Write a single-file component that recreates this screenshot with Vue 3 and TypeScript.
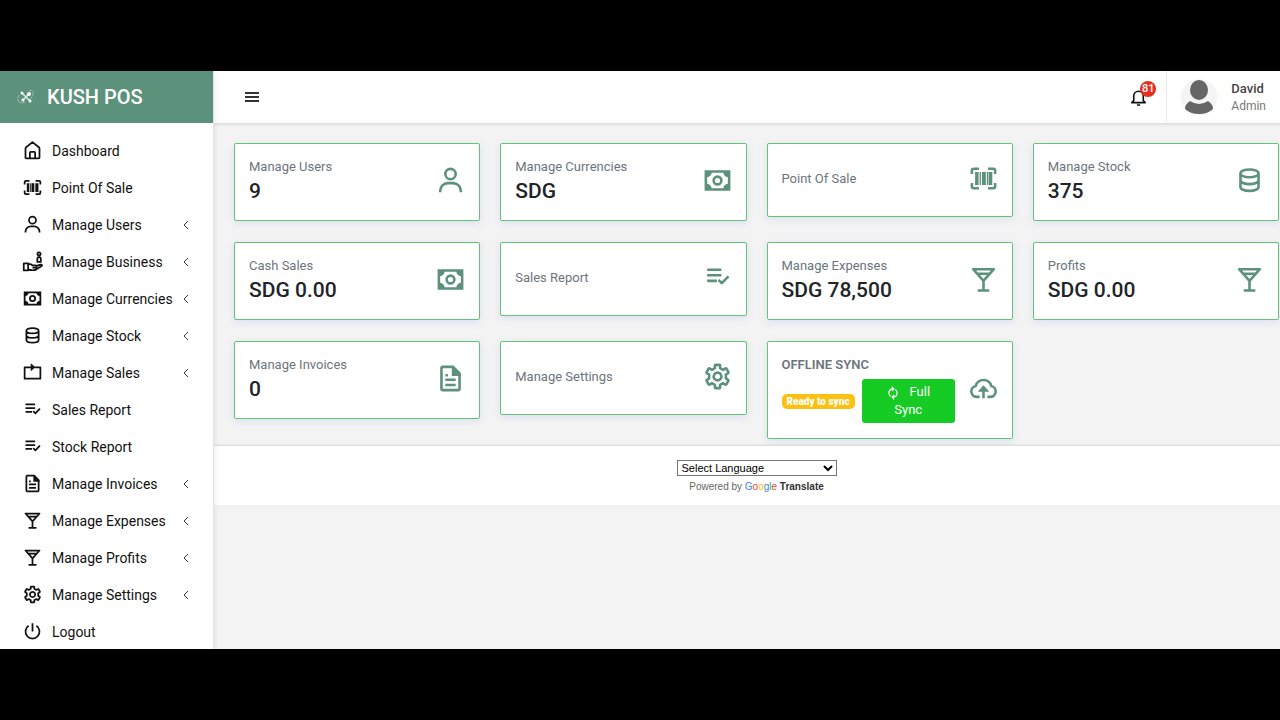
<script setup lang="ts">
import { ref } from 'vue'

interface Glyph {
  fill?: string
  stroke?: string
}

interface MenuItem {
  label: string
  icon: string
  sub?: boolean
}

interface StatCard {
  label: string
  icon: string
  value?: string
}

const glyphs: Record<string, Glyph> = {
  home: { stroke: 'M4 21V9.500Q4 9 4.400 8.600L12 2.500L19.600 8.600Q20 9 20 9.500V20Q20 21 19 21H5Q4 21 4 20M9 21V14.500Q9 13.500 10 13.500H14Q15 13.500 15 14.500V21' },
  barcode: {
    fill: 'M5.500 7H8.200v10H5.500zM9 7h1v10H9zM10.800 7h3v10h-3zM14.600 7h1v10h-1zM16 7h2.800v10H16z',
    stroke: 'M8.500 4.500H4.500Q3 4.500 3 6V8.500M15.500 4.500h4Q21 4.500 21 6V8.500M8.500 19.500H4.500Q3 19.500 3 18V15.500M15.500 19.500h4Q21 19.500 21 18V15.500',
  },
  user: { fill: 'M12 2a5 5 0 1 0 5 5 5 5 0 0 0-5-5zm0 8a3 3 0 1 1 3-3 3 3 0 0 1-3 3zm9 11v-1a7 7 0 0 0-7-7h-4a7 7 0 0 0-7 7v1h2v-1a5 5 0 0 1 5-5h4a5 5 0 0 1 5 5v1z' },
  business: { stroke: 'M2 14h5v8H2zM7 15h3l2 1.500h3.500q1.500 0 1.500 1.200t-1.500 1.300H12M17 17l4-1.500q2-.3 1.800 1.300l-6.300 4.200Q13 23 7 21M17.500 12.500V9q0-2 2-2t2 2v3.500zM19.500 1.500a1.800 1.800 0 1 1-.1 0z' },
  money: { fill: 'M2 4v16h20V4zm18 10.500q-3 .5-3.500 3.500h-9Q7 15 4 14.500v-5Q7 9 7.500 6h9q.5 3 3.500 3.500zM12 8a4 4 0 1 0 0 8 4 4 0 0 0 0-8zm0 6a2 2 0 1 1 0-4 2 2 0 0 1 0 4z' },
  stock: { stroke: 'M5 6.500c0-1.700 3-3 7-3s7 1.300 7 3-3 3-7 3-7-1.300-7-3zM5 6.500v10.500c0 1.700 3 3 7 3s7-1.300 7-3v-10.500M5 11.800c0 1.700 3 3 7 3s7-1.300 7-3' },
  sales: { stroke: 'M15 6h6v13H3V6h8', fill: 'M10 1.500 15.500 6 10 10.500z' },
  report: { fill: 'M4 5h11v2H4zM4 9.300h11v2H4zM4 13.600h7.500v2H4z', stroke: 'M12.800 13.800 15.300 16.300l5.200-5.200' },
  file: { stroke: 'M5 3h9l5 5v12q0 1-1 1H6q-1 0-1-1V4q0-1 1-1M8 13h8M8 17h8M8 9.500h2', fill: 'M13 3h1.500L20 8.500V10h-7z' },
  drink: { stroke: 'M4 4h16L12 13zM7 7.500h10M12 13v7.500M7.500 20.500h9' },
  gear: { stroke: 'M10 3.500Q10 3 10.500 3h3q.5 0 .5.500V5.500l2.300 1.300 1.800-1q.5-.3.8.2l1.500 2.600q.3.500-.2.800L18.500 10.500v3l1.700 1.100q.5.300.2.800l-1.500 2.600q-.3.500-.8.200l-1.800-1L14 18.500v2q0 .5-.5.500h-3q-.5 0-.5-.5v-2l-2.300-1.300-1.800 1q-.5.300-.8-.2l-1.500-2.600q-.3-.5.2-.8L5.500 13.500v-3L3.800 9.400q-.5-.3-.2-.8L5.100 6q.3-.5.8-.2l1.800 1L10 5.500zM12 9a3 3 0 1 0 .1 0z' },
  power: { stroke: 'M12 2.500V12M7.500 5.500a8 8 0 1 0 9 0' },
  cloud: { stroke: 'M9 18.500H6.500a4.300 4.300 0 0 1-.5-8.500 6.200 6.200 0 0 1 12 0 4.300 4.300 0 0 1-.5 8.500H15M12 19.500v-7', fill: 'M12 9.500 16.500 14.500h-9z' },
}

const menu: MenuItem[] = [
  { label: 'Dashboard', icon: 'home' },
  { label: 'Point Of Sale', icon: 'barcode' },
  { label: 'Manage Users', icon: 'user', sub: true },
  { label: 'Manage Business', icon: 'business', sub: true },
  { label: 'Manage Currencies', icon: 'money', sub: true },
  { label: 'Manage Stock', icon: 'stock', sub: true },
  { label: 'Manage Sales', icon: 'sales', sub: true },
  { label: 'Sales Report', icon: 'report' },
  { label: 'Stock Report', icon: 'report' },
  { label: 'Manage Invoices', icon: 'file', sub: true },
  { label: 'Manage Expenses', icon: 'drink', sub: true },
  { label: 'Manage Profits', icon: 'drink', sub: true },
  { label: 'Manage Settings', icon: 'gear', sub: true },
  { label: 'Logout', icon: 'power' },
]

const cards: StatCard[] = [
  { label: 'Manage Users', icon: 'user', value: '9' },
  { label: 'Manage Currencies', icon: 'money', value: 'SDG' },
  { label: 'Point Of Sale', icon: 'barcode' },
  { label: 'Manage Stock', icon: 'stock', value: '375' },
  { label: 'Cash Sales', icon: 'money', value: 'SDG 0.00' },
  { label: 'Sales Report', icon: 'report' },
  { label: 'Manage Expenses', icon: 'drink', value: 'SDG 78,500' },
  { label: 'Profits', icon: 'drink', value: 'SDG 0.00' },
  { label: 'Manage Invoices', icon: 'file', value: '0' },
  { label: 'Manage Settings', icon: 'gear' },
]

const language = ref('')
</script>

<template>
  <div class="page">
    <div class="app">
      <aside class="sidebar">
        <div class="brand">
          <svg class="logo" viewBox="0 0 20 18" aria-hidden="true">
            <path d="M3 7Q0 11 3 14q3 2 6 0M13 3q5-2 4 3-1 4-4 7" fill="none" stroke="#94b9aa" stroke-width="1" />
            <path d="M6 5l8 8M14 5l-7 7" stroke="#dfeae6" stroke-width="1.500" />
            <g fill="#fff"><circle cx="6" cy="5" r="1.500" /><circle cx="13" cy="6" r="2" /><circle cx="7" cy="12" r="1.500" /><circle cx="14" cy="13" r="1.500" /></g>
          </svg>
          <span>KUSH POS</span>
        </div>
        <nav class="menu">
          <a v-for="item in menu" :key="item.label" href="#" class="menu-item">
            <svg class="menu-icon" viewBox="0 0 24 24" aria-hidden="true">
              <path v-if="glyphs[item.icon].fill" :d="glyphs[item.icon].fill" class="solid" />
              <path v-if="glyphs[item.icon].stroke" :d="glyphs[item.icon].stroke" class="line" />
            </svg>
            <span>{{ item.label }}</span>
            <svg v-if="item.sub" class="chevron" viewBox="0 0 8 10" aria-hidden="true"><path d="M6 1 2 5l4 4" /></svg>
          </a>
        </nav>
      </aside>

      <div class="content">
        <header class="topbar">
          <button class="toggle" type="button" aria-label="Toggle menu">
            <svg viewBox="0 0 14 12"><path d="M0 2h14M0 6h14M0 10h14" /></svg>
          </button>
          <button class="bell" type="button" aria-label="Notifications">
            <svg viewBox="0 0 24 24"><path d="M6 16V10a6 6 0 0 1 12 0v6l2.500 2.500h-17zM10 21.500h4" /></svg>
            <span class="count">81</span>
          </button>
          <a href="#" class="profile">
            <svg class="avatar" viewBox="0 0 36 36" aria-hidden="true">
              <circle cx="18" cy="18" r="18" fill="#f4f4f4" />
              <ellipse cx="18" cy="11" rx="9" ry="10" fill="#666" />
              <path d="M9 22q9 6 18 0 5 3 5 8-5 5-14 5T4 30q0-5 5-8z" fill="#666" />
            </svg>
            <span class="who"><b>David</b><small>Admin</small></span>
          </a>
        </header>

        <main class="cards">
          <a v-for="card in cards" :key="card.label" href="#" class="card">
            <span class="info">
              <span class="label">{{ card.label }}</span>
              <span v-if="card.value" class="value">{{ card.value }}</span>
            </span>
            <svg class="card-icon" viewBox="0 0 24 24" aria-hidden="true">
              <path v-if="glyphs[card.icon].fill" :d="glyphs[card.icon].fill" class="solid" />
              <path v-if="glyphs[card.icon].stroke" :d="glyphs[card.icon].stroke" class="line" />
            </svg>
          </a>
          <section class="card">
            <div class="info">
              <span class="label strong">OFFLINE SYNC</span>
              <div class="sync">
                <span class="status">Ready to sync</span>
                <button type="button" class="sync-button">
                  <svg viewBox="0 0 24 24" aria-hidden="true">
                    <path d="M11 5q-6 1-6 7 0 4 3 6M13 19q6-1 6-7 0-4-3-6" class="line" />
                    <path d="M10 0l5 5-5 5zM14 14v10l-5-5z" class="solid" />
                  </svg>
                  Full Sync
                </button>
              </div>
            </div>
            <svg class="card-icon" viewBox="0 0 24 24" aria-hidden="true">
              <path :d="glyphs.cloud.fill" class="solid" />
              <path :d="glyphs.cloud.stroke" class="line" />
            </svg>
          </section>
        </main>

        <footer class="footer">
          <select v-model="language" aria-label="Select Language">
            <option value="">Select Language</option>
            <option value="ar">Arabic</option>
            <option value="fr">French</option>
          </select>
          <div class="powered">
            Powered by
            <a href="#"><span class="google"><i class="b">G</i><i class="r">o</i><i class="y">o</i><i class="b">g</i><i class="g">l</i><i class="r">e</i></span> <b>Translate</b></a>
          </div>
        </footer>
      </div>
    </div>
  </div>
</template>

<style>
body {
  background: #000;
}
</style>

<style scoped>
* {
  box-sizing: border-box;
}
.page {
  height: 100vh;
  padding: 71px 0;
  background: #000;
  font-family: Roboto, "Liberation Sans", sans-serif;
  font-size: 14px;
  color: #212529;
}
.app {
  height: 100%;
  display: flex;
  overflow: hidden;
  background: #f3f3f4;
}
a {
  color: inherit;
  text-decoration: none;
}
svg {
  display: block;
  flex: none;
}
button {
  border: 0;
  padding: 0;
  background: none;
  font: inherit;
}
.solid {
  fill: currentColor;
}
.line {
  fill: none;
  stroke: currentColor;
  stroke-width: 2;
  stroke-linejoin: round;
}
.sidebar {
  flex: none;
  width: 214px;
  background: #fff;
  border-right: 1px solid #e4e4e4;
  box-shadow: 0 2px 6px rgba(0, 0, 0, 0.1);
  z-index: 1;
}
.brand {
  height: 52px;
  padding-left: 16px;
  display: flex;
  align-items: center;
  gap: 11px;
  background: #5c917c;
  color: #fff;
  font-size: 20px;
  font-weight: 500;
}
.logo {
  width: 20px;
  height: 18px;
}
.menu {
  padding-top: 9px;
}
.menu-item {
  height: 37px;
  padding: 0 23px 0 22px;
  display: flex;
  align-items: center;
  gap: 9px;
  font-size: 14px;
  color: #111;
}
.menu-icon {
  width: 21px;
  height: 21px;
}
.chevron {
  width: 8px;
  height: 10px;
  margin-left: auto;
  fill: none;
  stroke: #333;
}
.content {
  flex: 1;
  min-width: 0;
}
.topbar {
  height: 52px;
  display: flex;
  align-items: center;
  background: #fff;
  box-shadow: 0 1px 3px rgba(0, 0, 0, 0.15);
}
.toggle {
  margin-left: 31px;
}
.toggle svg {
  width: 14px;
  height: 12px;
  stroke: #333;
  stroke-width: 2;
}
.bell {
  position: relative;
  margin: 0 18px 0 auto;
}
.bell svg {
  width: 19px;
  height: 19px;
  fill: none;
  stroke: #111;
  stroke-width: 2;
  stroke-linejoin: round;
}
.count {
  position: absolute;
  top: -7px;
  right: -8px;
  width: 16px;
  height: 16px;
  border-radius: 50%;
  background: #e62e21;
  color: #fff;
  font-size: 11px;
  font-weight: 500;
  line-height: 16px;
  text-align: center;
}
.profile {
  height: 100%;
  padding: 0 14px;
  display: flex;
  align-items: center;
  gap: 14px;
  border-left: 1px solid #ececec;
}
.avatar {
  width: 36px;
  height: 36px;
}
.who {
  display: flex;
  flex-direction: column;
  color: #444;
}
.who b {
  font-size: 13px;
  font-weight: 500;
  line-height: 18px;
}
.who small {
  font-size: 12px;
  line-height: 17px;
  color: #777;
}
.cards {
  padding: 20px 1px 7px 20px;
  display: grid;
  grid-template-columns: repeat(4, minmax(0, 1fr));
  gap: 21px 20px;
  align-items: start;
}
.card {
  padding: 12px 13px 15px 14px;
  display: flex;
  align-items: center;
  gap: 13px;
  background: #fff;
  border: 1px solid #62c474;
  border-radius: 2px;
  box-shadow: 0 2px 6px rgba(200, 205, 240, 0.5);
}
.info {
  flex: 1;
  min-width: 0;
  min-height: 45px;
  display: flex;
  flex-direction: column;
  justify-content: center;
}
.label {
  font-size: 13px;
  line-height: 21px;
  color: #6c757d;
}
.strong {
  font-weight: 600;
}
.value {
  font-size: 21px;
  font-weight: 500;
  line-height: 28px;
}
.card-icon {
  width: 31px;
  height: 31px;
  color: #5c917c;
}
.sync {
  margin-top: 4px;
  display: flex;
  align-items: center;
  gap: 7px;
}
.status {
  flex: none;
  padding: 0 5px;
  border-radius: 5px;
  background: #fdc010;
  color: #fff;
  font-size: 10px;
  font-weight: 900;
  line-height: 15px;
}
.sync-button {
  flex: 1;
  padding: 4px 20px;
  border-radius: 3px;
  background: #17cb25;
  color: #fff;
  font-size: 13px;
  line-height: 18px;
}
.sync-button svg {
  display: inline-block;
  width: 14px;
  height: 14px;
  margin-right: 6px;
  vertical-align: middle;
}
.footer {
  height: 59px;
  padding: 14px 0 0 19px;
  display: flex;
  flex-direction: column;
  align-items: center;
  background: #fff;
  box-shadow: 0 -1px 2px rgba(0, 0, 0, 0.12);
  font-family: "Liberation Sans", Arial, sans-serif;
  position: relative;
}
.footer select {
  width: 160px;
  height: 16px;
  padding: 0;
  border: 1px solid #767676;
  border-radius: 0;
  background: #fff;
  color: #000;
  font-family: inherit;
  font-size: 11px;
}
.powered {
  margin-top: 3px;
  font-size: 10px;
  line-height: 15px;
  color: #666;
}
.powered b {
  font-size: 10px;
  color: #333;
}
.google i {
  font-style: normal;
}
.b { color: #4285f4; }
.r { color: #ea4335; }
.y { color: #fbbc05; }
.g { color: #34a853; }
</style>
